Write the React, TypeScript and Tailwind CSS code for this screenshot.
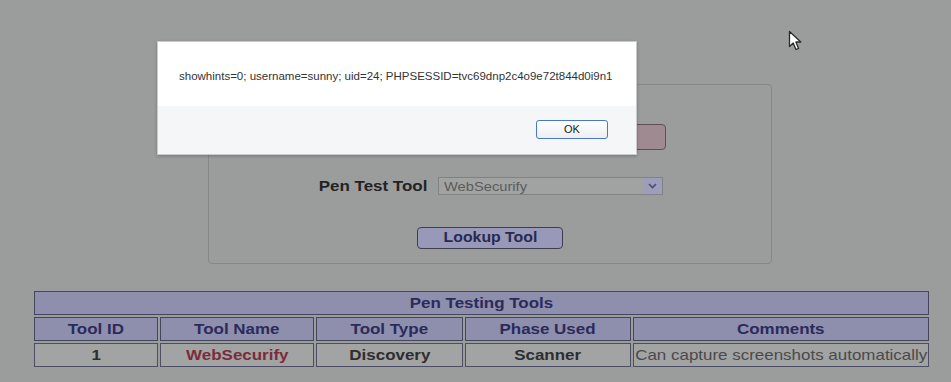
import React from "react";

const font = { fontFamily: '"Liberation Sans", Arial, sans-serif' };

const headers = ["Tool ID", "Tool Name", "Tool Type", "Phase Used", "Comments"];

// the capture is a bit stretched horizontally, so the page text is widened
const W = ({ children }: { children: React.ReactNode }) => (
  <span className="inline-block scale-x-[1.13] whitespace-nowrap">{children}</span>
);

function Cursor() {
  return (
    <svg
      className="absolute left-[788px] top-[30px]"
      width="18"
      height="22"
      viewBox="0 0 18 22"
    >
      <path
        d="M1.5 1.5 L1.5 16.5 L5.2 13 L8 19.5 L10.6 18.4 L7.9 12 L12.8 12 Z"
        fill="#ffffff"
        stroke="#2a2a2a"
        strokeWidth="1.3"
        strokeLinejoin="round"
      />
    </svg>
  );
}

function AlertDialog() {
  return (
    <div className="absolute left-[157px] top-[41px] w-[480px] h-[114px] flex flex-col border border-[#c9cbcd] shadow-[0_1px_3px_rgba(0,0,0,0.25)]">
      <div className="h-[64px] bg-white pl-[21px] pt-[26px] text-[11.5px] text-[#333]">
        showhints=0; username=sunny; uid=24; PHPSESSID=tvc69dnp2c4o9e72t844d0i9n1
      </div>
      <div className="flex-1 bg-[#f5f6f7] flex justify-end items-start pt-[14px] pr-[28px]">
        <button className="w-[72px] h-[19px] rounded-[3px] border border-[#4a78c8] bg-gradient-to-b from-white to-[#eceef0] text-[11px] text-[#222] flex items-center justify-center">
          OK
        </button>
      </div>
    </div>
  );
}

export default function App() {
  const cell = "h-[24px] border flex items-center justify-center";
  const head = `${cell} border-[#44465e] bg-[#8e8ead] font-bold text-[#2b2b5a]`;
  const data = `${cell} border-[#4c4e66] bg-[#a2a3a3]`;

  return (
    <div className="relative w-[951px] h-[382px] overflow-hidden bg-[#9b9d9d]" style={font}>
      <div className="pt-[84px] pl-[208px]">
        <div className="w-[564px] h-[180px] rounded-[4px] border border-[#85878a] flex flex-col items-center">
          <div className="mt-[39px] w-[352px] h-[26px] rounded-[4px] border border-[#5e4e56] bg-[#a08a92]" />
          <div className="mt-[25px] flex items-center gap-[8px]">
            <span className="w-[112px] text-center text-[15px] font-bold text-[#232323]">
              <W>Pen Test Tool</W>
            </span>
            <div className="w-[225px] h-[18px] border border-[#808286] bg-[#a1a3a3] flex items-center">
              <span className="flex-1 pl-[5px] text-[13px] leading-none text-[#5c5c5c]">
                <span className="inline-block origin-left scale-x-[1.13]">WebSecurify</span>
              </span>
              <div className="w-[19px] h-[16px] bg-[#9c9eba] flex items-center justify-center">
                <svg width="9" height="6" viewBox="0 0 9 6">
                  <path d="M1 1 L4.5 4.5 L8 1" fill="none" stroke="#4a4c70" strokeWidth="1.6" />
                </svg>
              </div>
            </div>
          </div>
          <button className="mt-[29px] w-[146px] h-[22px] rounded-[4px] border border-[#3e3e4c] bg-[#9898b8] text-[14px] font-bold text-[#2a2a50] flex items-center justify-center">
            <W>Lookup Tool</W>
          </button>
        </div>
      </div>

      <div className="ml-[34px] mt-[27px] w-[899px] grid grid-cols-[124px_154px_147px_166px_296px] gap-[2px] text-[15px]">
        <div className={`col-span-5 ${head}`}>
          <W>Pen Testing Tools</W>
        </div>
        {headers.map((h) => (
          <div key={h} className={head}>
            <W>{h}</W>
          </div>
        ))}
        <div className={`${data} font-bold text-[#2e2e2e]`}><W>1</W></div>
        <div className={`${data} font-bold text-[#7a2c3a]`}><W>WebSecurify</W></div>
        <div className={`${data} font-bold text-[#2e2e2e]`}><W>Discovery</W></div>
        <div className={`${data} font-bold text-[#2e2e2e]`}><W>Scanner</W></div>
        <div className={`${data} text-[#4a4a4a] overflow-hidden`}>
          <W>Can capture screenshots automatically</W>
        </div>
      </div>

      <AlertDialog />
      <Cursor />
    </div>
  );
}
